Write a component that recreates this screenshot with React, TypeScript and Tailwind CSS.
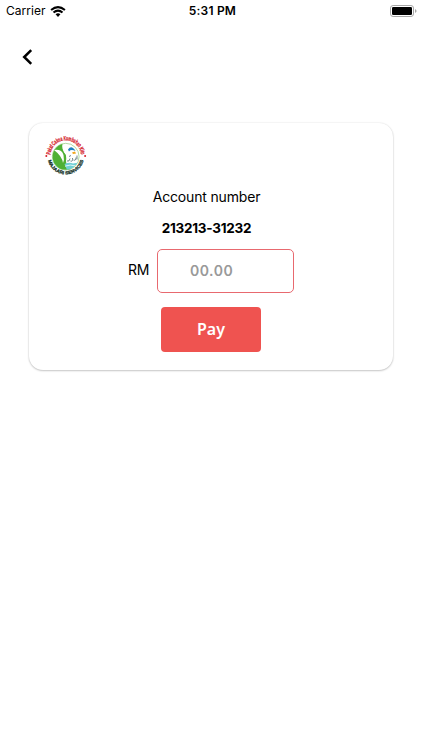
import { useState } from 'react';

function WifiIcon() {
  return (
    <svg width="16" height="11" viewBox="0 0 14 10" fill="none" stroke="#000" strokeWidth="1.8">
      <path d="M0.7 3.7 Q7 -1.7 13.3 3.7" />
      <path d="M2.9 6 Q7 2.4 11.1 6" />
      <path d="M4.8 7.6 Q7 5.7 9.2 7.6 L7 9.9 Z" fill="#000" stroke="none" />
    </svg>
  );
}

function BatteryIcon() {
  return (
    <svg width="27" height="12" viewBox="0 0 27 12">
      <rect x="0.5" y="0.5" width="23" height="11" rx="2.6" fill="#fff" stroke="#a6a6a6" />
      <rect x="2" y="2" width="20" height="8" rx="1.3" fill="#000" />
      <path d="M25 4 Q26.6 4.8 26.6 6 Q26.6 7.2 25 8 Z" fill="#a6a6a6" />
    </svg>
  );
}

function StatusBar() {
  return (
    <div className="grid h-[22px] grid-cols-3 items-center pl-[6px] pr-[5px] font-['Inter',sans-serif] text-[12px] text-black">
      <div className="flex items-center gap-[4px]">
        <span className="tracking-[0.05px]">Carrier</span>
        <WifiIcon />
      </div>
      <span className="pl-[2px] text-center font-semibold tracking-[0.2px]">5:31 PM</span>
      <div className="flex justify-end">
        <BatteryIcon />
      </div>
    </div>
  );
}

function Logo() {
  return (
    <svg width="50" height="46" viewBox="0 0 50 46" className="overflow-visible font-['Liberation_Sans_Narrow','Liberation_Sans',sans-serif] font-bold">
      <defs>
        <path id="logo-top" d="M10.4 23.7 A15.3 15.3 0 0 1 41 23.7" />
        <path id="logo-bottom" d="M7.8 27.5 A18.2 18.2 0 0 0 43.6 27.5" />
        <clipPath id="logo-clip">
          <circle cx="25.7" cy="24.7" r="13.1" />
        </clipPath>
      </defs>
      <circle cx="25.7" cy="24.7" r="13.4" fill="#fff" stroke="#8fc878" strokeWidth="0.7" />
      <g clipPath="url(#logo-clip)">
        <path d="M11 10 L23 10 Q21 16 24 20 Q27 23 26 29 Q26 34 33 39 L11 39 Z" fill="#4fb035" />
        <path d="M14 18 Q22 17 23.5 23 Q24.5 28 23 31 Q22 24 14 18 Z" fill="#fff" />
        <path d="M25.5 22 Q21.5 18 25 12 Q28 16 27 22 Z" fill="#fff" />
        <path d="M24.5 32 Q29 30 33 31.5 L39 30.5 L35 39 L27 38 Z" fill="#6fcfd4" />
        <path d="M25 34.2 Q30 32 36 34" fill="none" stroke="#fff" strokeWidth="0.8" />
      </g>
      <path d="M28 17.5 Q31.5 12.5 35.5 19 Q31 17 29 19.5 Z" fill="#1c7fc0" />
      <path d="M32 20.5 L35 19.5 L36 21.5 L33 22 Z" fill="#f1a51c" />
      <path
        d="M27 29 Q29.5 30 30 26.5 M30.5 29 Q33 30 32.5 26 M33.5 28 Q36 29 36 25.5 M37 27.5 L37 23.5 M29 24.5 L31 23.5"
        fill="none"
        stroke="#35545b"
        strokeWidth="0.7"
      />
      <text fill="#d5202b" stroke="#d5202b" strokeWidth="0.3" fontSize="6.2">
        <textPath href="#logo-top" startOffset="1" textLength="45.5" lengthAdjust="spacingAndGlyphs">
          Pakat Cakna Kumbahan Kito
        </textPath>
      </text>
      <text fill="#20382f" stroke="#20382f" strokeWidth="0.3" fontSize="4.6">
        <textPath href="#logo-bottom" startOffset="1" textLength="48.5" lengthAdjust="spacingAndGlyphs">
          MAJAARI SERVICES
        </textPath>
      </text>
      <circle cx="6.3" cy="24.1" r="1" fill="#d5202b" />
      <circle cx="45.1" cy="24.1" r="1" fill="#d5202b" />
    </svg>
  );
}

export default function App() {
  const [amount, setAmount] = useState('');

  return (
    <div className="h-[750px] w-full overflow-hidden bg-white text-black">
      <StatusBar />

      <button className="ml-[22px] mt-[27px] block" aria-label="Back">
        <svg width="11" height="16" viewBox="0 0 11 16" fill="none" stroke="#000" strokeWidth="2.5">
          <path d="M9.2 1.2 L2.2 8 L9.2 14.8" />
        </svg>
      </button>

      <div className="mx-[29px] mt-[58px] h-[247px] rounded-[14px] bg-white shadow-[0_0_2px_rgba(0,0,0,0.12),0_1px_2px_rgba(0,0,0,0.2)]">
        <div className="h-[64px] pl-[11px] pt-[9px]">
          <Logo />
        </div>

        <div className="mr-[9px] text-center font-['Inter',sans-serif] text-[14px] leading-[20px]">
          <p className="tracking-[-0.16px]">Account number</p>
          <p className="mt-[11px] text-[13.5px] font-bold tracking-[-0.25px]">213213-31232</p>
        </div>

        <div className="ml-[99px] mt-[11px] flex items-center gap-[8px] font-['Inter',sans-serif]">
          <span className="w-[21px] pb-[3px] text-[14px] tracking-[-0.3px]">RM</span>
          <input
            value={amount}
            onChange={(e) => setAmount(e.target.value)}
            placeholder="00.00"
            className="h-[44px] w-[137px] rounded-[5px] border border-[#e8696f] bg-white pb-[2px] pl-[32px] text-[14px] font-semibold tracking-[0.5px] text-black outline-none placeholder:text-[#999999]"
          />
        </div>

        <button className="ml-[132px] mt-[14px] block h-[45px] w-[100px] rounded-[4px] bg-[#ef5350] pb-px font-['Noto_Sans',sans-serif] text-[16px] font-semibold text-white">
          Pay
        </button>
      </div>
    </div>
  );
}
